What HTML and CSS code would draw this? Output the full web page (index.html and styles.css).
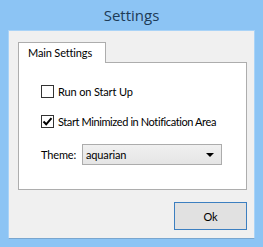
FILE: index.html
```html
<!DOCTYPE html>
<html>
<head>
<meta charset="utf-8">
<link rel="stylesheet" href="styles.css">
</head>
<body>
<div class="window">
  <div class="titlebar">Settings</div>
  <div class="client">
    <div class="tabs">
      <div class="tab">Main Settings</div>
    </div>
    <div class="panel">
      <label class="check-row">
        <span class="box"></span>
        <span>Run on Start Up</span>
      </label>
      <label class="check-row second">
        <span class="box">
          <svg width="11" height="11" viewBox="0 0 11 11"><path d="M1.5 5.5 L4.2 8.3 L9.5 2.2" fill="none" stroke="#000" stroke-width="2"/></svg>
        </span>
        <span class="long">Start Minimized in Notification Area</span>
      </label>
      <div class="theme-row">
        <span class="theme-label">Theme:</span>
        <div class="select">
          <span>aquarian</span>
          <span class="arrow"></span>
        </div>
      </div>
    </div>
    <div class="buttons">
      <div class="btn">Ok</div>
    </div>
  </div>
</div>
</body>
</html>
```
FILE: styles.css
```css
html, body {
  margin: 0;
  padding: 0;
}
body {
  width: 263px;
  height: 247px;
  background: #8cc4f4;
  font-family: "Lato", "Open Sans", sans-serif;
  font-size: 11px;
  letter-spacing: -0.15px;
  color: #000;
  overflow: hidden;
  white-space: nowrap;
}
.window {
  width: 263px;
  height: 247px;
  display: flex;
  flex-direction: column;
  padding: 0 8px 8px 8px;
  box-sizing: border-box;
}
.titlebar {
  height: 30px;
  line-height: 30px;
  text-align: center;
  font-family: "Open Sans", sans-serif;
  font-size: 15px;
  letter-spacing: 0;
  color: #1d3b57;
}
.client {
  flex: 1;
  background: #f0f0f0;
  border: 1px solid #a9d3f7;
  border-bottom-color: #79a6cf;
  box-sizing: border-box;
  padding: 11px 7px 0 9px;
  display: flex;
  flex-direction: column;
}
.tabs {
  display: flex;
  height: 20px;
  position: relative;
  z-index: 1;
}
.tab {
  width: 88px;
  height: 21px;
  box-sizing: border-box;
  background: #fff;
  border: 1px solid #adadad;
  border-bottom: none;
  padding-left: 9px;
  line-height: 19px;
}
.panel {
  height: 128px;
  box-sizing: border-box;
  background: #fff;
  border: 1px solid #adadad;
  padding: 22px 0 0 22px;
  display: flex;
  flex-direction: column;
}
.check-row {
  display: flex;
  align-items: center;
  gap: 4px;
  height: 13px;
}
.check-row.second {
  margin-top: 17px;
}
.long {
  letter-spacing: -0.4px;
}
.box {
  width: 13px;
  height: 13px;
  box-sizing: border-box;
  border: 1px solid #333;
  background: #fff;
  display: flex;
  align-items: center;
  justify-content: center;
}
.box svg {
  display: block;
}
.theme-row {
  display: flex;
  align-items: center;
  margin-top: 16px;
}
.theme-label {
  width: 41px;
}
.select {
  width: 140px;
  height: 21px;
  box-sizing: border-box;
  border: 1px solid #acacac;
  background: linear-gradient(#f0f0f0, #e5e5e5);
  display: flex;
  align-items: center;
  justify-content: space-between;
  padding: 0 7px 0 3px;
}
.arrow {
  width: 0;
  height: 0;
  border-left: 4px solid transparent;
  border-right: 4px solid transparent;
  border-top: 4px solid #000;
}
.buttons {
  display: flex;
  justify-content: flex-end;
  margin-top: 12px;
}
.btn {
  width: 73px;
  height: 28px;
  box-sizing: border-box;
  border: 1px solid #3c7fc0;
  background: #e1e1e1;
  display: flex;
  align-items: center;
  justify-content: center;
}
```
